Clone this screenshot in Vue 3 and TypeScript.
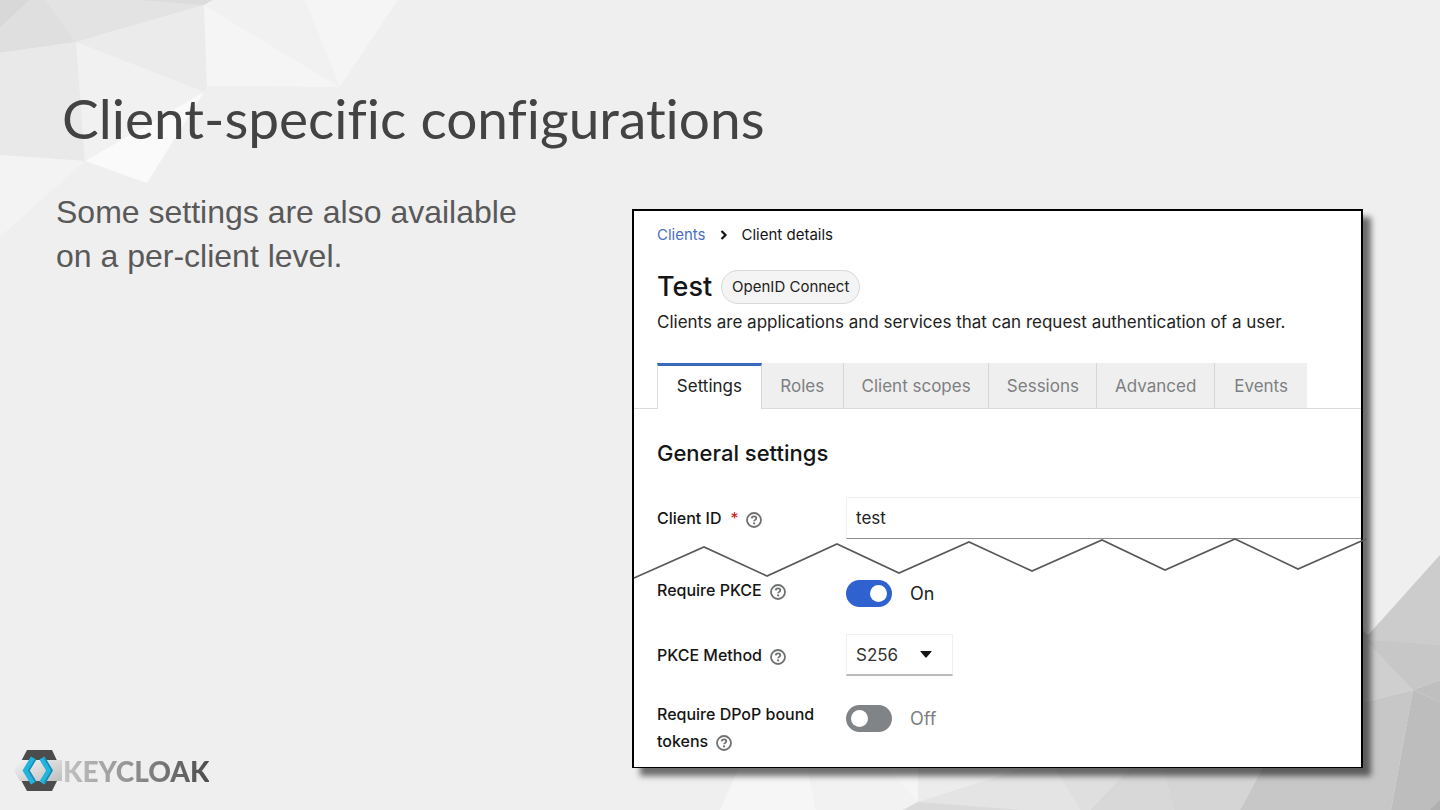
<script setup lang="ts">
import { ref } from 'vue'

interface Facet {
  points: string
  fill: string
}

const facets: Facet[] = [
  { points: '0,0 30,0 0,28', fill: '#d8d8d8' },
  { points: '30,0 46,0 76,42 0,53 0,28', fill: '#dfdfdf' },
  { points: '46,0 213,0 204,5 76,42', fill: '#e3e3e3' },
  { points: '140,0 213,0 204,5', fill: '#dcdcdc' },
  { points: '76,42 204,5 207,86 204,92', fill: '#ebebeb' },
  { points: '0,53 76,42 85,161 0,155', fill: '#e9e9e9' },
  { points: '76,42 204,92 85,161', fill: '#f1f1f1' },
  { points: '204,92 147,183 85,161', fill: '#fafafa' },
  { points: '204,5 340,87 207,86', fill: '#f5f5f5' },
  { points: '204,5 213,0 305,0 340,87', fill: '#f1f1f1' },
  { points: '305,0 398,0 340,87', fill: '#f5f5f5' },
  { points: '0,155 85,161 0,237', fill: '#f3f3f3' },
  { points: '742,760 806,760 816,810 720,810', fill: '#f6f6f6' },
  { points: '806,760 918,760 918,802 903,810 816,810', fill: '#f2f2f2' },
  { points: '880,760 918,760 918,802', fill: '#f5f5f5' },
  { points: '918,760 1060,760 918,802', fill: '#ececec' },
  { points: '918,802 1050,760 1080,810 903,810', fill: '#e4e4e4' },
  { points: '918,802 1020,810 903,810', fill: '#dadada' },
  { points: '1050,760 1138,760 1090,810 1080,810', fill: '#dfdfdf' },
  { points: '1138,760 1160,760 1174,810 1090,810', fill: '#d8d8d8' },
  { points: '1160,760 1267,760 1240,810 1174,810', fill: '#d5d5d5' },
  { points: '1440,555 1440,645 1340,642 1360,644', fill: '#cccccc' },
  { points: '1340,610 1370,637 1413,690 1340,708', fill: '#cfcfcf' },
  { points: '1366,640 1440,645 1440,680 1413,690', fill: '#c7c7c7' },
  { points: '1413,690 1440,680 1440,702', fill: '#bfbfbf' },
  { points: '1340,708 1413,690 1391,810 1240,810 1267,760', fill: '#c7c7c7' },
  { points: '1413,690 1440,702 1440,810 1391,810', fill: '#bdbdbd' },
  { points: '1440,800 1440,810 1430,810', fill: '#b0b0b0' },
]

const tabs: string[] = ['Settings', 'Roles', 'Client scopes', 'Sessions', 'Advanced', 'Events']
const activeTab = ref('Settings')
const clientId = ref('test')
const requirePkce = ref(true)
const pkceMethod = ref('S256')
const requireDpop = ref(false)
</script>

<template>
  <main class="slide">
    <svg class="backdrop" viewBox="0 0 1440 810" preserveAspectRatio="none" aria-hidden="true">
      <polygon v-for="f in facets" :key="f.points" :points="f.points" :fill="f.fill" />
    </svg>
    <svg class="defs" width="0" height="0" aria-hidden="true">
      <symbol id="help" viewBox="0 0 16 16">
        <circle cx="8" cy="8" r="7" fill="none" stroke="#6f7173" stroke-width="1.8" />
        <path d="M5.7 6.4C5.9 5 6.8 4.4 8 4.4c1.3 0 2.3.8 2.3 1.900 0 1.500-2.100 1.600-2.200 3" fill="none" stroke="#6f7173" stroke-width="1.8" />
        <circle cx="8.1" cy="11.4" r="1.1" fill="#6f7173" />
      </symbol>
    </svg>

    <h1 class="title">Client-specific configurations</h1>

    <div class="content">
      <div class="left">
        <p class="lead">Some settings are also available<br />on a per-client level.</p>
        <div class="logo">
          <svg class="mark" viewBox="0 0 49 42" aria-hidden="true">
            <defs>
              <linearGradient id="band" x1="0" y1="0" x2="1" y2="1">
                <stop offset="0" stop-color="#f4f4f4" />
                <stop offset="1" stop-color="#bebebe" />
              </linearGradient>
            </defs>
            <path d="M13 0h25l10 21-10 20H13L2 21z" fill="#4c4c4c" />
            <path d="M6 10h42v21H6L0 21z" fill="url(#band)" />
            <g fill="none" stroke-width="6">
              <path d="M19.500 8L12 20.500l7.500 12.500" stroke="#22b4dc" />
              <path d="M28 8l7.500 12.500L28 33" stroke="#22b4dc" />
            </g>
            <g fill="none" stroke-width="1.500">
              <path d="M21.500 9.500L14.800 20.500l6.700 11" stroke="#168cb4" />
              <path d="M30.500 8l7.500 12.500L30.500 33" stroke="#168cb4" />
            </g>
          </svg>
          <span class="wordmark">KEYCLOAK</span>
        </div>
      </div>

      <section class="card" aria-label="Client details">
        <nav class="crumbs" aria-label="Breadcrumb">
          <a href="#clients">Clients</a>
          <svg class="chevron" viewBox="0 0 8 10" aria-hidden="true"><path d="M1.500 1l4 4-4 4" fill="none" stroke="#151515" stroke-width="2.200" /></svg>
          <span>Client details</span>
        </nav>

        <header class="head">
          <h2>Test</h2>
          <span class="pill">OpenID Connect</span>
        </header>
        <p class="desc">Clients are applications and services that can request authentication of a user.</p>

        <div class="tabs" role="tablist">
          <button
            v-for="t in tabs"
            :key="t"
            type="button"
            role="tab"
            class="tab"
            :class="{ active: t === activeTab }"
            :aria-selected="t === activeTab"
            @click="activeTab = t"
          >{{ t }}</button>
        </div>

        <h3>General settings</h3>

        <div class="row id-row">
          <div class="name">
            <label for="client-id">Client ID<span class="star">*</span></label>
            <button type="button" class="help" aria-label="Help for Client ID"><svg><use href="#help" /></svg></button>
          </div>
          <input id="client-id" v-model="clientId" class="text" type="text" />
        </div>

        <svg class="tear" viewBox="0 0 732 40" preserveAspectRatio="none" aria-hidden="true">
          <polyline
            points="0,39 70,8 133,37 203,5 265,34 335,3 398,32 468,1 531,31 601,0 664,30 732,0"
            fill="none"
            stroke="#595959"
            stroke-width="1.600"
          />
        </svg>

        <div class="row pkce-row">
          <div class="name">
            <label for="pkce">Require PKCE</label>
            <button type="button" class="help" aria-label="Help for Require PKCE"><svg><use href="#help" /></svg></button>
          </div>
          <div class="toggle">
            <input id="pkce" v-model="requirePkce" type="checkbox" role="switch" class="switch" />
            <span class="state">{{ requirePkce ? 'On' : 'Off' }}</span>
          </div>
        </div>

        <div class="row method-row">
          <div class="name">
            <label for="method">PKCE Method</label>
            <button type="button" class="help" aria-label="Help for PKCE Method"><svg><use href="#help" /></svg></button>
          </div>
          <div class="select">
            <select id="method" v-model="pkceMethod">
              <option>S256</option>
            </select>
            <svg class="caret" viewBox="0 0 12 7" aria-hidden="true"><path d="M1 0h10q1 0 .4.800L6.700 6.300q-.7.700-1.400 0L.6.800Q0 0 1 0z" fill="#151515" /></svg>
          </div>
        </div>

        <div class="row dpop-row">
          <div class="name">
            <label for="dpop">Require DPoP bound<br />tokens</label>
            <button type="button" class="help" aria-label="Help for Require DPoP bound tokens"><svg><use href="#help" /></svg></button>
          </div>
          <div class="toggle">
            <input id="dpop" v-model="requireDpop" type="checkbox" role="switch" class="switch" />
            <span class="state" :class="{ off: !requireDpop }">{{ requireDpop ? 'On' : 'Off' }}</span>
          </div>
        </div>
      </section>
    </div>
  </main>
</template>

<style>
body {
  background: #efefef;
}
</style>

<style scoped>
* {
  box-sizing: border-box;
}
.slide {
  position: relative;
  display: flex;
  flex-direction: column;
  min-height: 100vh;
  padding: 82px 77px 18px 14px;
  background: #efefef;
  font-family: 'Liberation Sans', Arial, sans-serif;
}
.backdrop {
  position: absolute;
  inset: 0;
  width: 100%;
  height: 100%;
}
.defs {
  position: absolute;
}
.title {
  position: relative;
  margin: 0 0 55px;
  padding-left: 48px;
  font: 400 55px/72px Lato, sans-serif;
  font-variant-ligatures: none;
  color: #434343;
}
.content {
  position: relative;
  flex: 1;
  display: grid;
  grid-template-columns: 618fr 731fr;
}
.left {
  display: flex;
  flex-direction: column;
  justify-content: space-between;
  margin-top: -19px;
}
.lead {
  margin: 0;
  padding-left: 42px;
  font-size: 32px;
  line-height: 44px;
  color: #595959;
}
.logo {
  display: flex;
  align-items: center;
}
.mark {
  width: 49px;
  height: 42px;
}
.wordmark {
  font: 900 28px/42px Lato, sans-serif;
  background: linear-gradient(90deg, #c4c4c4, #939393 45%, #4d4d4d);
  background-clip: text;
  color: transparent;
}
.card {
  align-self: start;
  min-width: 0;
  border: 2px solid #000;
  border-bottom-width: 1px;
  background: #fff;
  box-shadow: 8px 8px 6px rgba(0, 0, 0, 0.55);
  padding: 12px 0 12px;
  font-family: Inter, sans-serif;
  color: #222;
}
.crumbs {
  display: flex;
  align-items: center;
  padding-left: 23px;
  font-size: 15px;
  line-height: 24px;
  color: #151515;
}
.crumbs a {
  color: #4a6fc4;
  text-decoration: none;
}
.chevron {
  width: 8px;
  height: 10px;
  margin: 0 14px;
}
.head {
  display: flex;
  align-items: center;
  gap: 9px;
  padding: 23px 0 0 23px;
}
h2 {
  margin: 0;
  font-size: 27px;
  line-height: 34px;
  font-weight: 500;
  color: #151515;
}
.pill {
  padding: 0 10px;
  border: 1px solid #d8d8d8;
  border-radius: 17px;
  background: #f4f4f4;
  font-size: 15px;
  line-height: 32px;
}
.desc {
  margin: 6px 0 29px;
  padding-left: 23px;
  font-size: 17px;
  line-height: 24px;
  white-space: nowrap;
}
.tabs {
  display: grid;
  grid-template-columns: 105fr 82fr 146fr 108fr 118fr 92fr;
  padding: 0 54px 0 23px;
  box-shadow: inset 0 -1px #dcdcdc;
}
.tab {
  height: 46px;
  padding: 0;
  border: 0;
  border-right: 1px solid #d6d6d6;
  border-bottom: 1px solid #dcdcdc;
  background: #efefef;
  font: 400 17px/24px Inter, sans-serif;
  color: #7d7f82;
  white-space: nowrap;
}
.tab:last-child {
  border-right: 0;
}
.tab.active {
  border-top: 3px solid #3b69bd;
  border-left: 1px solid #dcdcdc;
  border-bottom: 0;
  padding-bottom: 3px;
  background: #fff;
  color: #222;
}
h3 {
  margin: 28px 0 0 23px;
  font-size: 22px;
  line-height: 32px;
  font-weight: 500;
  color: #151515;
}
.row {
  display: grid;
  grid-template-columns: 189px 1fr;
  padding-left: 23px;
}
.name {
  font-size: 16px;
  line-height: 27px;
  font-weight: 500;
  color: #151515;
}
.star {
  margin-left: 9px;
  font-weight: 400;
  color: #c9190b;
}
.help {
  width: 16px;
  height: 16px;
  margin-left: 8px;
  padding: 0;
  border: 0;
  background: none;
  vertical-align: -4px;
}
.help svg {
  display: block;
  width: 16px;
  height: 16px;
}
.id-row {
  padding-top: 28px;
}
.id-row .name {
  padding-top: 8px;
}
.text {
  width: 100%;
  height: 42px;
  padding: 0 9px;
  border: 1px solid #f0f0f0;
  border-right: 0;
  border-bottom-color: #8a8d90;
  background: #fff;
  font: 400 17px/24px Inter, sans-serif;
  color: #222;
}
.tear {
  position: relative;
  display: block;
  width: calc(100% + 5px);
  height: 40px;
  margin-bottom: 1px;
  overflow: visible;
}
.toggle {
  display: flex;
  align-items: center;
  gap: 18px;
  height: 27px;
  font-size: 18px;
}
.switch {
  appearance: none;
  display: flex;
  align-items: center;
  width: 46px;
  height: 27px;
  margin: 0;
  padding: 0 5px;
  border-radius: 14px;
  background: #818487;
}
.switch::before {
  content: '';
  width: 17px;
  height: 17px;
  border-radius: 50%;
  background: #fff;
}
.switch:checked {
  justify-content: flex-end;
  background: #2f62cf;
}
.off {
  color: #7d7f82;
}
.pkce-row .name {
  margin-top: -3px;
}
.method-row {
  margin-top: 27px;
}
.method-row .name {
  padding-top: 8px;
}
.select {
  position: relative;
  width: 107px;
}
select {
  appearance: none;
  display: block;
  width: 100%;
  height: 42px;
  padding: 0 9px;
  border: 1px solid #f0f0f0;
  border-bottom: 2px solid #b8babc;
  border-radius: 0;
  background: #fff;
  font: 400 17px/24px Inter, sans-serif;
  color: #333;
}
.caret {
  position: absolute;
  top: 17px;
  right: 21px;
  width: 12px;
  height: 7px;
  pointer-events: none;
}
.dpop-row {
  margin-top: 25px;
}
.dpop-row .toggle {
  margin-top: 4px;
}
</style>
